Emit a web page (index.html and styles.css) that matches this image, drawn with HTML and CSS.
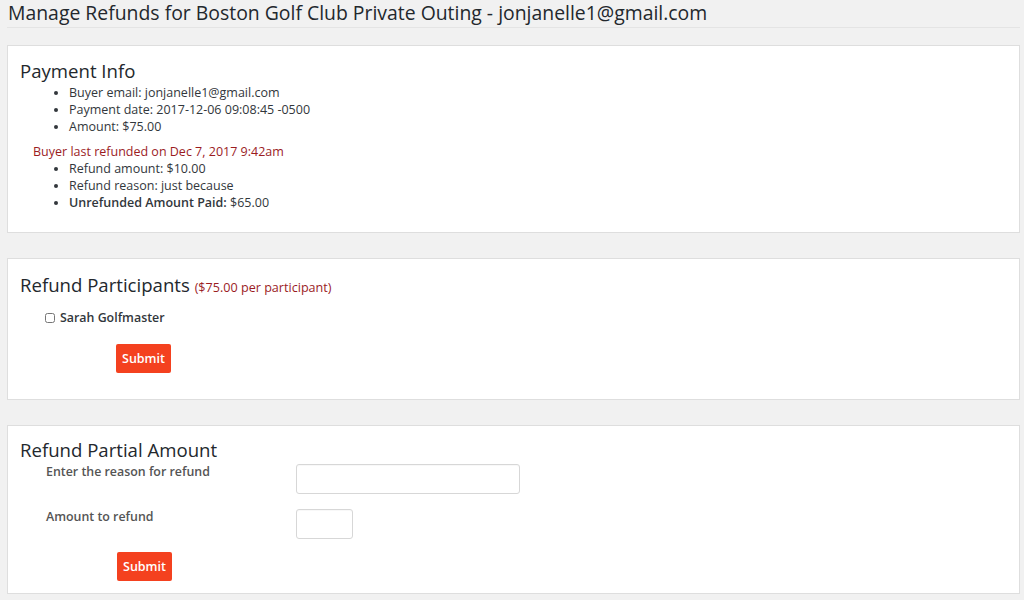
FILE: index.html
```html
<!DOCTYPE html>
<html>
<head>
<meta charset="utf-8">
<link rel="stylesheet" href="styles.css">
</head>
<body>
<div class="page">
  <h1 class="title">Manage Refunds for Boston Golf Club Private Outing - jonjanelle1@gmail.com</h1>

  <section class="panel panel-info">
    <h2 class="panel-title">Payment Info</h2>
    <ul class="info-list">
      <li>Buyer email: jonjanelle1@gmail.com</li>
      <li>Payment date: 2017-12-06 09:08:45 -0500</li>
      <li>Amount: $75.00</li>
    </ul>
    <p class="refund-note">Buyer last refunded on Dec 7, 2017 9:42am</p>
    <ul class="info-list">
      <li>Refund amount: $10.00</li>
      <li>Refund reason: just because</li>
      <li><strong>Unrefunded Amount Paid:</strong> $65.00</li>
    </ul>
  </section>

  <section class="panel panel-participants">
    <h2 class="panel-title">Refund Participants <span class="per">($75.00 per participant)</span></h2>
    <label class="participant"><input type="checkbox" class="check"> Sarah Golfmaster</label>
    <div class="btn-row"><button class="btn">Submit</button></div>
  </section>

  <section class="panel panel-partial">
    <h2 class="panel-title">Refund Partial Amount</h2>
    <div class="form-grid">
      <label class="field-label">Enter the reason for refund</label>
      <input type="text" class="input input-wide">
      <label class="field-label">Amount to refund</label>
      <input type="text" class="input input-small">
    </div>
    <div class="btn-row btn-row-partial"><button class="btn">Submit</button></div>
  </section>
</div>
</body>
</html>
```

FILE: styles.css
```css
html, body {
  margin: 0;
  padding: 0;
  background: #f1f1f1;
  font-family: "Open Sans", "Noto Sans", sans-serif;
  color: #23282d;
}

.page {
  padding: 0 4px 0 7px;
}

.title {
  margin: 0;
  padding: 2px 1px 3px;
  font-size: 19.4px;
  font-weight: 400;
  line-height: 22px;
  border-bottom: 1px solid #e4e4e4;
  color: #23282d;
}

.panel {
  background: #fff;
  border: 1px solid #dedede;
  padding: 0 12px;
  box-sizing: border-box;
}

.panel-info {
  margin-top: 17px;
  height: 188px;
  padding-top: 12px;
}

.panel-participants {
  margin-top: 25px;
  height: 142px;
  padding-top: 13px;
}

.panel-partial {
  margin-top: 25px;
  height: 169px;
  padding-top: 11px;
}

.panel-title {
  margin: 0;
  font-size: 18.6px;
  font-weight: 400;
  line-height: 26px;
  color: #23282d;
}

.info-list {
  margin: 0;
  padding-left: 49px;
  font-size: 12.5px;
  line-height: 17px;
  color: #32373c;
}

.info-list strong {
  font-weight: 600;
}

.refund-note {
  margin: 8px 0 0 13px;
  font-size: 12.5px;
  line-height: 17px;
  color: #9b1c1f;
}

.per {
  font-size: 12.6px;
  color: #9b1c1f;
}

.participant {
  display: flex;
  align-items: center;
  gap: 5px;
  margin: 8px 0 0 25px;
  font-size: 12.4px;
  font-weight: 600;
  color: #32373c;
}

.check {
  margin: 0;
  width: 10px;
  height: 10px;
}

.btn-row {
  margin-top: 18px;
  padding-left: 96px;
}

.btn {
  background: #f4411f;
  color: #fff;
  border: 0;
  border-radius: 2px;
  font-family: "Open Sans", "Noto Sans", sans-serif;
  font-size: 12.5px;
  font-weight: 600;
  height: 29px;
  padding: 0 6px;
  min-width: 55px;
  cursor: pointer;
}

.form-grid {
  display: grid;
  grid-template-columns: 250px auto;
  justify-content: start;
  row-gap: 14px;
  padding-left: 26px;
}

.field-label {
  font-size: 12.4px;
  font-weight: 600;
  color: #555;
  line-height: 17px;
  margin-top: 0;
}

.input {
  box-sizing: border-box;
  border: 1px solid #d7d7d7;
  border-radius: 3px;
  height: 30px;
  margin-top: 1px;
  background: #fff;
  box-shadow: inset 0 1px 1px rgba(0,0,0,0.03);
}

.input-wide {
  width: 224px;
}

.input-small {
  width: 57px;
}

.btn-row-partial {
  margin-top: 13px;
  padding-left: 97px;
}
```
